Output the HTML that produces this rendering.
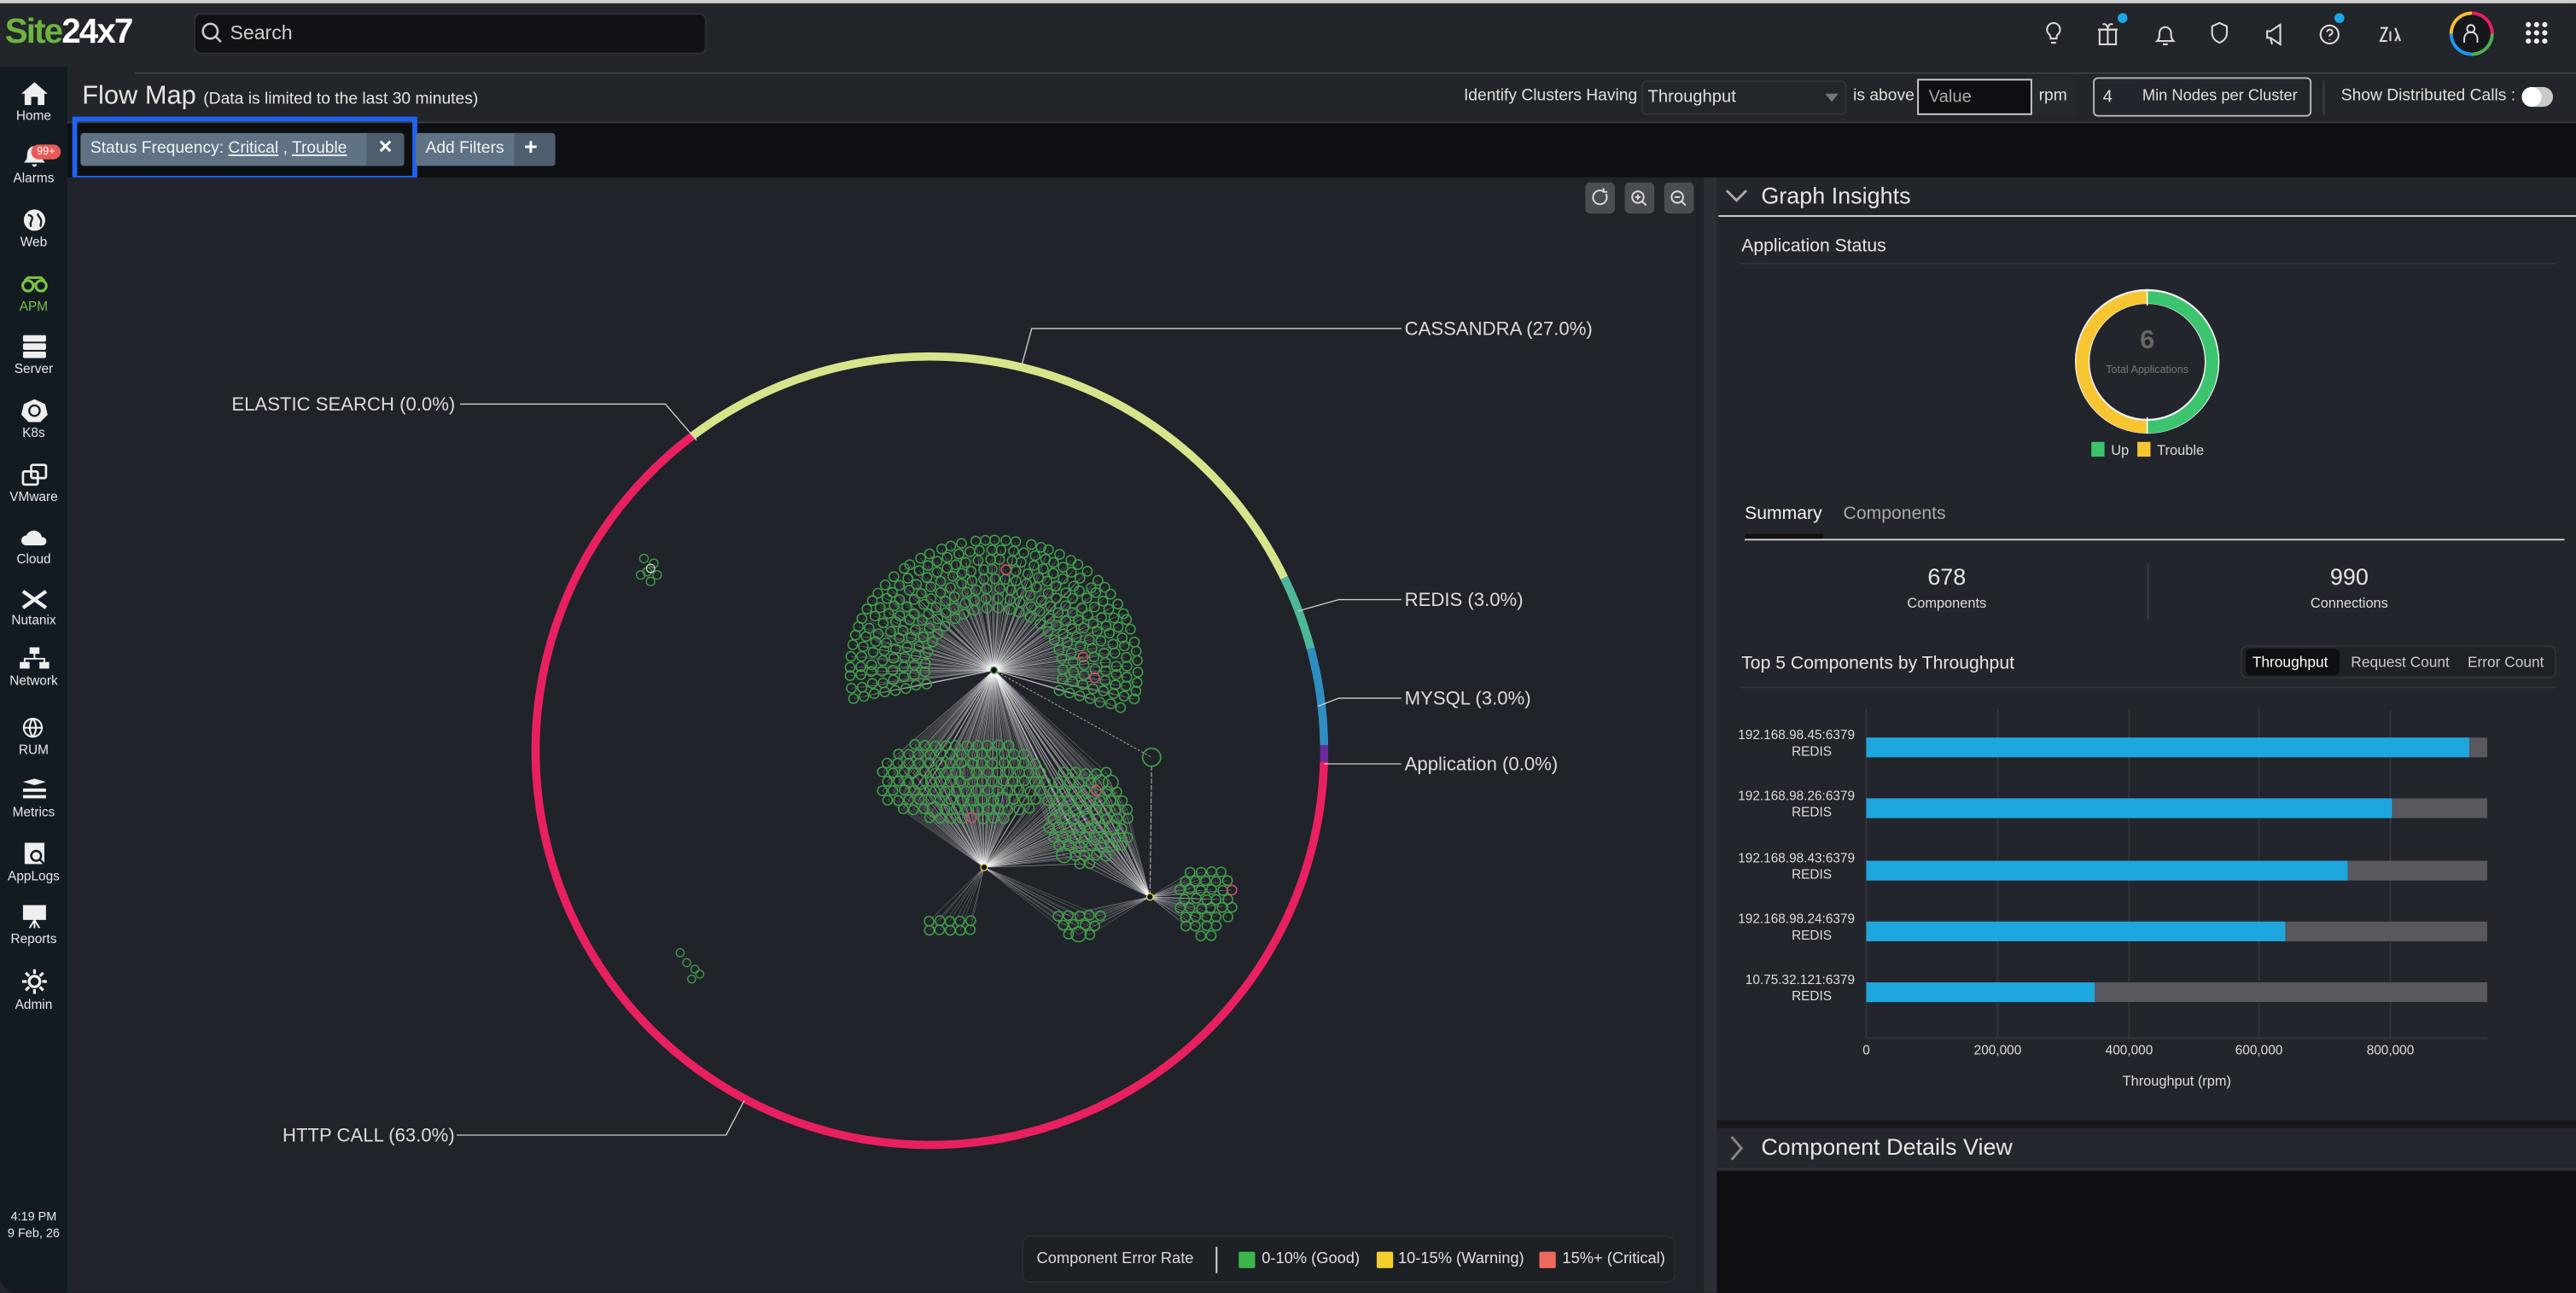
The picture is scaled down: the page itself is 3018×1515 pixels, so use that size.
<!DOCTYPE html>
<html><head><meta charset="utf-8">
<style>
*{box-sizing:border-box;margin:0;padding:0}
html,body{width:3018px;height:1514px;overflow:hidden;background:#0e0f13;font-family:"Liberation Sans",sans-serif}
#s{position:absolute;left:0;top:0;width:1568px;height:787px;transform:scale(1.92474);transform-origin:0 0;background:#222529;overflow:hidden}
.a{position:absolute;white-space:nowrap}
.t{color:#e4e4e4}
.sb .it{position:absolute;left:0;width:41px;text-align:center;color:#e8e8e8;font-size:8px}
.sb svg{display:block;margin:0 auto 2px}
</style></head><body><div id="s">
<div class="a" style="left:0;top:0;width:1568px;height:2px;background:#cfcfcf"></div>
<div class="a" style="left:3px;top:8px;font-size:21px;font-weight:bold;letter-spacing:-1px"><span style="color:#6cb33f">Site</span><span style="color:#fff">24x7</span></div>
<div class="a" style="left:118px;top:8px;width:312px;height:25px;background:#111216;border:1px solid #2e3036;border-radius:4px"></div>
<svg class="a" style="left:122px;top:13px" width="14" height="14" viewBox="0 0 14 14"><circle cx="6" cy="6" r="4.5" fill="none" stroke="#ccc" stroke-width="1.3"/><path d="M9.3 9.3L12.5 12.5" stroke="#ccc" stroke-width="1.3"/></svg>
<div class="a" style="left:140px;top:13px;font-size:12px;color:#cfcfcf">Search</div>
<svg class="a" style="left:1240px;top:10px" width="320" height="22" viewBox="0 0 320 22" fill="none" stroke="#d8d8d8" stroke-width="1.1">
<path d="M10 4a4 4 0 0 1 2.6 7c-.6.6-.8 1.3-.8 2.5h-3.6c0-1.2-.2-1.9-.8-2.5A4 4 0 0 1 10 4zM8.5 16h3"/>
<rect x="38" y="8" width="10" height="9"/><path d="M37 8h12M43 8v9M40 5c1-1 3 0 3 3M46 5c-1-1-3 0-3 3"/>
<path d="M73 15c1-1 1.5-2 1.5-5a3.5 3.5 0 0 1 7 0c0 3 .5 4 1.5 5zM76.5 17h3"/>
<path d="M111 4l4.5 2v4c0 3-2 5-4.5 6-2.5-1-4.5-3-4.5-6V6z"/>
<path d="M140 9h2l6-4v12l-6-4h-2zM142 13l1 4"/>
<circle cx="178" cy="11" r="5.5"/><path d="M176.5 9.5a1.6 1.6 0 1 1 2 1.6c-.5.2-.5.6-.5 1.2M178 14v.5"/>
<path d="M209 7h4l-4 8h4M215 9v6M218 7l3 8M218 15l2-4"/>
</svg>
<div class="a" style="left:1289px;top:8px;width:6px;height:6px;border-radius:3px;background:#1ea7e8"></div>
<div class="a" style="left:1421px;top:8px;width:6px;height:6px;border-radius:3px;background:#1ea7e8"></div>
<div class="a" style="left:1491px;top:7px;width:27px;height:27px;border-radius:14px;background:conic-gradient(#e91e63 0 25%,#4caf50 0 50%,#2196f3 0 75%,#fbc02d 0)"></div>
<div class="a" style="left:1493px;top:9px;width:23px;height:23px;border-radius:12px;background:#15171b"></div>
<svg class="a" style="left:1497px;top:13px" width="14" height="14" viewBox="0 0 14 14" fill="none" stroke="#ddd" stroke-width="1"><circle cx="7" cy="4.5" r="2.3"/><path d="M3 13v-2.5a4 4 0 0 1 8 0V13"/></svg>
<svg class="a" style="left:1537px;top:13px" width="14" height="14" viewBox="0 0 14 14" fill="#eee"><circle cx="2" cy="2" r="1.6"/><circle cx="7" cy="2" r="1.6"/><circle cx="12" cy="2" r="1.6"/><circle cx="2" cy="7" r="1.6"/><circle cx="7" cy="7" r="1.6"/><circle cx="12" cy="7" r="1.6"/><circle cx="2" cy="12" r="1.6"/><circle cx="7" cy="12" r="1.6"/><circle cx="12" cy="12" r="1.6"/></svg>
<div class="a" style="left:82px;top:44px;width:1486px;height:1px;background:#3a3d42"></div>

<div class="a sb" style="left:0;top:41px;width:41px;height:746px;background:#131b22;border-radius:0 0 0 10px">
<div class="it" style="top:9px"><svg width="16" height="14" viewBox="0 0 16 14" fill="#eee"><path d="M8 0L0 7h2v7h4V9h4v5h4V7h2z"/></svg>Home</div>
<div class="it" style="top:47px"><svg width="16" height="14" viewBox="0 0 16 14" fill="#eee"><path d="M8 1c3 0 4.5 2.5 4.5 5.5 0 2 .5 3 2 4.5H1.5c1.5-1.5 2-2.5 2-4.5C3.5 3.5 5 1 8 1zM6.5 12h3a1.5 1.5 0 0 1-3 0z"/></svg>Alarms</div>
<div class="a" style="left:19px;top:47px;width:18px;height:9px;border-radius:5px;background:#e95a5a;color:#fff;font-size:6.5px;text-align:center;line-height:9px">99+</div>
<div class="it" style="top:86px"><svg width="16" height="14" viewBox="0 0 16 14"><circle cx="8" cy="7" r="6.5" fill="#eee"/><path d="M4 4c2 0 3 1 2.5 2.5S5 9 6 11M10 3c0 2 1.5 2 2 4s-1 3 0 4" stroke="#131b22" stroke-width="1.2" fill="none"/></svg>Web</div>
<div class="it" style="top:125px;color:#7cc142"><svg width="18" height="14" viewBox="0 0 18 14" fill="none" stroke="#7cc142" stroke-width="1.6"><circle cx="5" cy="8" r="3.2"/><circle cx="13" cy="8" r="3.2"/><path d="M8 7h2M3 5l2-2h8l2 2"/></svg>APM</div>
<div class="it" style="top:163px"><svg width="16" height="14" viewBox="0 0 16 14" fill="#eee"><rect x="1" y="0" width="14" height="4" rx="1"/><rect x="1" y="5" width="14" height="4" rx="1"/><rect x="1" y="10" width="14" height="4" rx="1"/></svg>Server</div>
<div class="it" style="top:202px"><svg width="16" height="14" viewBox="0 0 16 14"><path d="M8 0l6.5 3 1.5 6.5-4.5 4.5h-7L0 9.5 1.5 3z" fill="#eee"/><circle cx="8" cy="7" r="3.2" fill="none" stroke="#131b22" stroke-width="1.2"/></svg>K8s</div>
<div class="it" style="top:241px"><svg width="16" height="14" viewBox="0 0 16 14" fill="none" stroke="#eee" stroke-width="1.4"><rect x="1" y="5" width="9" height="8" rx="1"/><rect x="6" y="1" width="9" height="8" rx="1"/></svg>VMware</div>
<div class="it" style="top:279px"><svg width="16" height="14" viewBox="0 0 16 14" fill="#eee"><path d="M3 12a3 3 0 0 1 0-6 5 5 0 0 1 9.5 1A2.5 2.5 0 0 1 13 12z"/></svg>Cloud</div>
<div class="it" style="top:318px"><svg width="16" height="12" viewBox="0 0 16 12" stroke="#eee" stroke-width="2.2"><path d="M1 1l14 10M15 1L1 11"/></svg>Nutanix</div>
<div class="it" style="top:353px"><svg width="18" height="14" viewBox="0 0 18 14" fill="#eee"><rect x="6" y="0" width="6" height="4"/><rect x="0" y="9" width="6" height="4"/><rect x="12" y="9" width="6" height="4"/><path d="M9 4v3M3 9V7h12v2" stroke="#eee" fill="none"/></svg>Network</div>
<div class="it" style="top:395px"><svg width="16" height="14" viewBox="0 0 16 14" fill="none" stroke="#eee" stroke-width="1.1"><circle cx="7" cy="7" r="5.5"/><path d="M1.5 7h11M7 1.5c-2.5 3-2.5 8 0 11M7 1.5c2.5 3 2.5 8 0 11"/></svg>RUM</div>
<div class="it" style="top:433px"><svg width="16" height="14" viewBox="0 0 16 14" fill="#eee"><path d="M1 2l7-2 7 2-7 2zM1 6h14v2H1zM1 10h14v2H1z"/></svg>Metrics</div>
<div class="it" style="top:472px"><svg width="16" height="14" viewBox="0 0 16 14"><rect x="2" y="0" width="12" height="13" fill="#eee"/><circle cx="9" cy="8" r="3" fill="none" stroke="#131b22" stroke-width="1.3"/><path d="M11 10l3 3" stroke="#131b22" stroke-width="1.3"/></svg>AppLogs</div>
<div class="it" style="top:510px"><svg width="16" height="14" viewBox="0 0 16 14" fill="#eee"><rect x="1" y="0" width="14" height="9"/><path d="M8 9v5M5 14l3-5 3 5" stroke="#eee" fill="none"/></svg>Reports</div>
<div class="it" style="top:549px"><svg width="16" height="15" viewBox="0 0 16 16" fill="none" stroke="#eee" stroke-width="1.8"><circle cx="8" cy="8" r="3.5"/><path d="M8 0v3M8 13v3M0 8h3M13 8h3M2.3 2.3l2.2 2.2M11.5 11.5l2.2 2.2M2.3 13.7l2.2-2.2M11.5 4.5l2.2-2.2"/></svg>Admin</div>
<div class="it" style="top:695px;font-size:7.5px;line-height:10px">4:19 PM<br>9 Feb, 26</div>
</div>

<div class="a t" style="left:50px;top:50px;font-size:16px;color:#e6e6e6">Flow Map <span style="font-size:10px">(Data is limited to the last 30 minutes)</span></div>
<div class="a" style="left:891px;top:53px;font-size:10px;color:#e0e0e0">Identify Clusters Having</div>
<div class="a" style="left:999px;top:49px;width:125px;height:21px;border:1px solid #303338;border-radius:3px;background:#23262b"></div>
<div class="a" style="left:1003px;top:53px;font-size:10.5px;color:#e0e0e0">Throughput</div>
<div class="a" style="left:1111px;top:57px;width:0;height:0;border-left:4px solid transparent;border-right:4px solid transparent;border-top:5px solid #777"></div>
<div class="a" style="left:1128px;top:53px;font-size:10px;color:#e0e0e0">is above</div>
<div class="a" style="left:1167px;top:48px;width:70px;height:22px;background:#0e0f13;border:1px solid #cfcfcf"></div>
<div class="a" style="left:1174px;top:53px;font-size:10.5px;color:#aaa">Value</div>
<div class="a" style="left:1237px;top:48px;width:27px;height:22px;background:#26292e"></div>
<div class="a" style="left:1241px;top:53px;font-size:10px;color:#e0e0e0">rpm</div>
<div class="a" style="left:1274px;top:47px;width:133px;height:24px;border:1px solid #b8b8b8;border-radius:3px;background:#22252b"></div>
<div class="a" style="left:1280px;top:53px;font-size:10.5px;color:#e0e0e0">4</div>
<div class="a" style="left:1304px;top:53px;font-size:9.5px;color:#e0e0e0">Min Nodes per Cluster</div>
<div class="a" style="left:1414px;top:49px;width:1px;height:21px;background:#3a3d42"></div>
<div class="a" style="left:1425px;top:53px;font-size:10px;color:#e0e0e0">Show Distributed Calls :</div>
<div class="a" style="left:1535px;top:53px;width:19px;height:12px;border-radius:6px;background:#c9c9c9"></div>
<div class="a" style="left:1535px;top:53px;width:12px;height:12px;border-radius:6px;background:#fff"></div>
<div class="a" style="left:41px;top:74px;width:1527px;height:1px;background:#3a3d42"></div>

<div class="a" style="left:41px;top:75px;width:1527px;height:33px;background:#0e0f13"></div>
<div class="a" style="left:44px;top:71px;width:210px;height:39px;border:3px solid #1f63f0"></div>
<div class="a" style="left:49px;top:81px;width:197px;height:20px;background:#5f7385;border-radius:2px"></div>
<div class="a" style="left:223px;top:81px;width:23px;height:20px;background:#4d5e6e;border-radius:0 2px 2px 0"></div>
<div class="a" style="left:55px;top:85px;font-size:10px;color:#f2f2f2">Status Frequency: <u>Critical</u> , <u>Trouble</u></div>
<div class="a" style="left:230px;top:83px;font-size:11px;color:#fff;font-weight:bold">✕</div>
<div class="a" style="left:253px;top:81px;width:85px;height:20px;background:#5f7385;border-radius:2px"></div>
<div class="a" style="left:313px;top:81px;width:25px;height:20px;background:#4d5e6e;border-radius:0 2px 2px 0"></div>
<div class="a" style="left:259px;top:85px;font-size:10px;color:#f2f2f2">Add Filters</div>
<div class="a" style="left:319px;top:81px;font-size:14px;color:#fff;font-weight:bold">+</div>

<div class="a" style="left:41px;top:108px;width:996px;height:679px;background:#202329"></div>
<div class="a" style="left:1037px;top:108px;width:8px;height:679px;background:#2b2e34"></div>
<svg class="a" style="left:964px;top:111px" width="70" height="20" viewBox="0 0 70 20">
<rect x="1" y="0" width="18" height="19" rx="3" fill="#4a4d52"/><rect x="25" y="0" width="18" height="19" rx="3" fill="#4a4d52"/><rect x="49" y="0" width="18" height="19" rx="3" fill="#4a4d52"/>
<g fill="none" stroke="#ddd" stroke-width="1"><path d="M13.5 7a4.2 4.2 0 1 1-1.5-1.5M12 3.5v2.3h2.3"/><circle cx="33" cy="9" r="3.5"/><path d="M35.5 11.5l2.5 2.5M31.3 9h3.4M33 7.3v3.4"/><circle cx="57" cy="9" r="3.5"/><path d="M59.5 11.5l2.5 2.5M55.3 9h3.4"/></g></svg>

<svg id="g" class="a" style="left:0;top:0" width="1040" height="787" viewBox="0 0 1040 787"></svg>

<div class="a" style="left:622px;top:752px;width:398px;height:29px;background:#1d2025;border:1px solid #2a2d33;border-radius:5px"></div>
<div class="a" style="left:631px;top:761px;font-size:9.5px;color:#d8d8d8">Component Error Rate</div>
<div class="a" style="left:740px;top:759px;width:1px;height:16px;background:#ddd"></div>
<div class="a" style="left:754px;top:762px;width:10px;height:10px;background:#3cb54a;border-radius:1px"></div>
<div class="a" style="left:768px;top:761px;font-size:9.5px;color:#e0e0e0">0-10% (Good)</div>
<div class="a" style="left:838px;top:762px;width:10px;height:10px;background:#f2cf2c;border-radius:1px"></div>
<div class="a" style="left:851px;top:761px;font-size:9.5px;color:#e0e0e0">10-15% (Warning)</div>
<div class="a" style="left:937px;top:762px;width:10px;height:10px;background:#ee6a5f;border-radius:1px"></div>
<div class="a" style="left:951px;top:761px;font-size:9.5px;color:#e0e0e0">15%+ (Critical)</div>

<div class="a" style="left:1045px;top:108px;width:523px;height:574px;background:#22252b"></div>
<svg class="a" style="left:1050px;top:113px" width="14" height="12" viewBox="0 0 14 12"><path d="M1 3l6 6 6-6" fill="none" stroke="#aaa" stroke-width="1.5"/></svg>
<div class="a" style="left:1072px;top:111px;font-size:14px;color:#e6e6e6">Graph Insights</div>
<div class="a" style="left:1046px;top:131px;width:522px;height:1px;background:#d8d8d8"></div>
<div class="a" style="left:1060px;top:144px;font-size:11px;color:#e6e6e6">Application Status</div>
<div class="a" style="left:1059px;top:160px;width:497px;height:1px;background:#32353b"></div>
<svg class="a" style="left:1260px;top:173px" width="94" height="94" viewBox="0 0 94 94">
<circle cx="47" cy="47" r="39.5" fill="none" stroke="#f0f0f0" stroke-width="9"/>
<path d="M47 8a39.5 39.5 0 0 1 0 79" fill="none" stroke="#3cc46f" stroke-width="7.5"/>
<path d="M47 8a39.5 39.5 0 0 0 0 79" fill="none" stroke="#f6c531" stroke-width="7.5"/>
<path d="M47 3v10M47 81v10" stroke="#fff" stroke-width="0.8"/></svg>
<div class="a" style="left:1293px;top:199px;width:28px;text-align:center;font-size:16px;color:#666;font-weight:bold">6</div>
<div class="a" style="left:1267px;top:222px;width:80px;text-align:center;font-size:6.5px;color:#777">Total Applications</div>
<div class="a" style="left:1273px;top:269px;width:8px;height:9px;background:#3cc46f"></div>
<div class="a" style="left:1285px;top:269px;font-size:8.5px;color:#ddd">Up</div>
<div class="a" style="left:1301px;top:269px;width:8px;height:9px;background:#f6c531"></div>
<div class="a" style="left:1313px;top:269px;font-size:8.5px;color:#ddd">Trouble</div>
<div class="a" style="left:1062px;top:307px;font-size:11px;color:#f2f2f2">Summary</div>
<div class="a" style="left:1122px;top:307px;font-size:11px;color:#aaa">Components</div>
<div class="a" style="left:1062px;top:325px;width:48px;height:3px;background:#111;border-radius:2px"></div>
<div class="a" style="left:1062px;top:328px;width:499px;height:1px;background:#cfcfcf"></div>
<div class="a" style="left:1135px;top:343px;width:100px;text-align:center;font-size:14px;color:#e6e6e6">678</div>
<div class="a" style="left:1135px;top:362px;width:100px;text-align:center;font-size:8.5px;color:#ddd">Components</div>
<div class="a" style="left:1307px;top:343px;width:1px;height:34px;background:#3a3d42"></div>
<div class="a" style="left:1380px;top:343px;width:100px;text-align:center;font-size:14px;color:#e6e6e6">990</div>
<div class="a" style="left:1380px;top:362px;width:100px;text-align:center;font-size:8.5px;color:#ddd">Connections</div>
<div class="a" style="left:1060px;top:398px;font-size:11px;color:#e6e6e6">Top 5 Components by Throughput</div>
<div class="a" style="left:1364px;top:393px;width:192px;height:20px;border:1px solid #2e3137;border-radius:4px;background:#1e2126"></div>
<div class="a" style="left:1367px;top:395px;width:57px;height:16px;border-radius:3px;background:#0e0f12"></div>
<div class="a" style="left:1371px;top:398px;font-size:9px;color:#fff">Throughput</div>
<div class="a" style="left:1431px;top:398px;font-size:9px;color:#ccc">Request Count</div>
<div class="a" style="left:1502px;top:398px;font-size:9px;color:#ccc">Error Count</div>
<div class="a" style="left:1059px;top:418px;width:497px;height:1px;background:#32353b"></div>
<svg class="a" style="left:1045px;top:420px" width="523" height="260" viewBox="1045 420 523 260" font-family="Liberation Sans, sans-serif">
<g stroke="#34373d" stroke-width="0.8"><path d="M1136 432v200M1216 432v200M1296 432v200M1375 432v200M1455 432v200M1136 632h378"/></g>
<g fill="#58585e"><rect x="1136" y="449" width="378" height="12"/><rect x="1136" y="486" width="378" height="12"/><rect x="1136" y="524" width="378" height="12"/><rect x="1136" y="561" width="378" height="12"/><rect x="1136" y="598" width="378" height="12"/></g>
<g fill="#1ea7df"><rect x="1136" y="449" width="367" height="12"/><rect x="1136" y="486" width="320" height="12"/><rect x="1136" y="524" width="293" height="12"/><rect x="1136" y="561" width="255" height="12"/><rect x="1136" y="598" width="139" height="12"/></g>
<g fill="#ddd" font-size="8" text-anchor="end">
<text x="1129" y="450">192.168.98.45:6379</text><text x="1115" y="460">REDIS</text>
<text x="1129" y="487">192.168.98.26:6379</text><text x="1115" y="497">REDIS</text>
<text x="1129" y="525">192.168.98.43:6379</text><text x="1115" y="535">REDIS</text>
<text x="1129" y="562">192.168.98.24:6379</text><text x="1115" y="572">REDIS</text>
<text x="1129" y="599">10.75.32.121:6379</text><text x="1115" y="609">REDIS</text></g>
<g fill="#ddd" font-size="8" text-anchor="middle"><text x="1136" y="642">0</text><text x="1216" y="642">200,000</text><text x="1296" y="642">400,000</text><text x="1375" y="642">600,000</text><text x="1455" y="642">800,000</text>
<text x="1325" y="661" font-size="8.5">Throughput (rpm)</text></g>
</svg>
<div class="a" style="left:1045px;top:682px;width:523px;height:5px;background:#17191d"></div>
<div class="a" style="left:1045px;top:687px;width:523px;height:25px;background:#24272d;border-bottom:1px solid #33363c"></div>
<svg class="a" style="left:1052px;top:691px" width="10" height="16" viewBox="0 0 10 16"><path d="M2 1l6 7-6 7" fill="none" stroke="#888" stroke-width="1.5"/></svg>
<div class="a" style="left:1072px;top:690px;font-size:14px;color:#e6e6e6">Component Details View</div>
<div class="a" style="left:1045px;top:713px;width:523px;height:74px;background:#0e0f13"></div>
</div>

<script>
(function(){
var NS="http://www.w3.org/2000/svg",g=document.getElementById("g");
var s=12345;function R(){s=(s*16807)%2147483647;return s/2147483647;}
function el(t,a,p){var e=document.createElementNS(NS,t);for(var k in a)e.setAttribute(k,a[k]);(p||g).appendChild(e);return e;}
var cx=566,cy=457,r=240;
function pt(d){var a=d*Math.PI/180;return [cx+r*Math.cos(a),cy+r*Math.sin(a)];}
function arc(a1,a2,col){var p1=pt(a1),p2=pt(a2);var large=(a2-a1)>180?1:0;
el("path",{d:"M"+p1[0]+" "+p1[1]+"A"+r+" "+r+" 0 "+large+" 1 "+p2[0]+" "+p2[1],fill:"none",stroke:col,"stroke-width":5});}
var lines=el("g",{stroke:"#ffffff","stroke-opacity":"0.28","stroke-width":"0.35"});
var circ=el("g",{fill:"none","stroke-width":"0.8"});
var H1=[605,408],H2=[599,528],H3=[700,546];
function node(x,y,rr,hubs){hubs.forEach(function(h){el("line",{x1:h[0],y1:h[1],x2:x,y2:y},lines);});
var red=R()<0.025;el("circle",{cx:x,cy:y,r:rr||2.9,stroke:red?"#d0506a":"#3f9e48"},circ);}
for(var rr=40;rr<=88;rr+=6.2){var n=Math.floor(rr*Math.PI*1.17/6.4);
for(var i=0;i<=n;i++){var a=(168+i*(210/n)+(R()-0.5)*2)*Math.PI/180;var rx=rr*1.05;
var x=H1[0]+rx*Math.cos(a),y=H1[1]+rr*0.95*Math.sin(a);if(y>432)continue;node(x,y,2.9,[H1]);}}
function blob(ex,ey,rx,ry,hubs,sp){sp=sp||6.4;for(var y=ey-ry;y<=ey+ry;y+=sp*0.87){var row=Math.round((y-ey)/sp);
for(var x=ex-rx+(row%2?sp/2:0);x<=ex+rx;x+=sp){var dx=(x-ex)/rx,dy=(y-ey)/ry;if(dx*dx+dy*dy>1)continue;
node(x+(R()-0.5),y+(R()-0.5),R()<0.06?4.5:2.9,hubs);}}}
blob(587,475,53,27,[H1,H2]);
blob(662,496,27,31,[H1,H2,H3]);
blob(576,563,17,8,[H2]);
blob(656,561,15,9,[H2,H3]);
blob(733,548,18,23,[H3]);
el("line",{x1:H1[0],y1:H1[1],x2:701,y2:461,stroke:"#aaa","stroke-width":0.5,"stroke-dasharray":"1.5 1"});
el("line",{x1:701,y1:466,x2:H3[0],y2:H3[1],stroke:"#aaa","stroke-width":0.6,"stroke-dasharray":"3 1"});
el("circle",{cx:701,cy:461,r:5.5,fill:"none",stroke:"#3f9e48","stroke-width":0.9});
[[H1,"#3f9e48"],[H2,"#e6d040"],[H3,"#e6d040"]].forEach(function(h){el("circle",{cx:h[0][0],cy:h[0][1],r:2,fill:"#0d0e10",stroke:h[1],"stroke-width":0.7});});
[[392,340],[398,343],[394,348],[400,350],[396,354],[390,350]].forEach(function(p){el("circle",{cx:p[0],cy:p[1],r:2.6,fill:"none",stroke:"#3f9e48","stroke-width":0.7});});
el("circle",{cx:396,cy:346,r:2.5,fill:"none",stroke:"#ccc","stroke-width":0.7});
[[414,580],[418,586],[423,590],[421,596],[426,593]].forEach(function(p){el("circle",{cx:p[0],cy:p[1],r:2.4,fill:"none",stroke:"#3f9e48","stroke-width":0.7});});
arc(233,334,"#d6e58c");arc(334,345,"#4db79a");arc(345,359.2,"#2f8dc1");arc(359.2,361.6,"#6a2a9c");arc(361.6,593,"#e8205f");
var lg=el("g",{fill:"none",stroke:"#cfcfcf","stroke-width":0.7});
el("path",{d:"M622 222L628 200H853"},lg);el("path",{d:"M280 246H405L424 268"},lg);
el("path",{d:"M790 372L815 365H853"},lg);el("path",{d:"M802 430L815 425H853"},lg);
el("path",{d:"M806 465H853"},lg);el("path",{d:"M278 691H442L453 670"},lg);
var tg=el("g",{fill:"#dcdcdc","font-size":"11.5","font-family":"Liberation Sans, sans-serif"});
[["CASSANDRA (27.0%)",855,204],["ELASTIC SEARCH (0.0%)",141,250],["REDIS (3.0%)",855,369],["MYSQL (3.0%)",855,429],["Application (0.0%)",855,469],["HTTP CALL (63.0%)",172,695]].forEach(function(t){var e=el("text",{x:t[1],y:t[2]},tg);e.textContent=t[0];});
})();
</script>
</body></html>
